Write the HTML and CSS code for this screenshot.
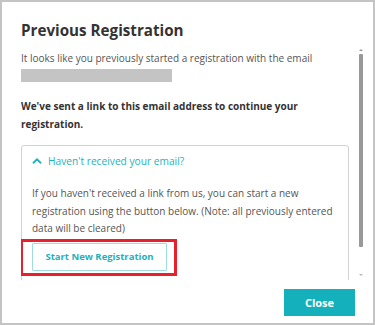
FILE: index.html
```html
<!DOCTYPE html>
<html lang="en">
<head>
<meta charset="utf-8">
<title>Previous Registration</title>
<link rel="stylesheet" href="styles.css">
</head>
<body>
<div class="dialog">
  <h1 class="title">Previous Registration</h1>
  <div class="body">
    <div class="content">
      <p class="intro">It looks like you previously started a registration with the email</p>
      <div class="redacted"></div>
      <p class="notice">We've sent a link to this email address to continue your registration.</p>
      <div class="accordion">
        <div class="acc-head">
          <svg class="chev" width="10" height="6" viewBox="0 0 10 6"><polyline points="1,5.2 5,1.3 9,5.2" fill="none" stroke="#21b3be" stroke-width="1.9"/></svg>
          <span>Haven't received your email?</span>
        </div>
        <div class="acc-body">
          <p class="acc-text">If you haven't received a link from us, you can start a new registration using the button below. (Note: all previously entered data will be cleared)</p>
          <div class="btn-wrap">
            <button class="btn-outline">Start New Registration</button>
            <span class="highlight"></span>
          </div>
        </div>
      </div>
    </div>
    <div class="scrollbar">
      <span class="arrow up"></span>
      <span class="thumb"></span>
      <span class="track-rest"></span>
      <span class="arrow down"></span>
    </div>
  </div>
  <div class="footer">
    <button class="btn-primary">Close</button>
  </div>
</div>
</body>
</html>
```
FILE: styles.css
```css
html, body {
  margin: 0;
  padding: 0;
  background: #ffffff;
}
body {
  font-family: "Open Sans", "Liberation Sans", sans-serif;
  color: #333;
}
.dialog {
  width: 375px;
  height: 325px;
  box-sizing: border-box;
  border: 2px solid #c4c4c4;
  display: flex;
  flex-direction: column;
  background: #fff;
}
.title {
  margin: 18px 0 0 19px;
  font-size: 15.2px;
  line-height: 20px;
  font-weight: 700;
  color: #333;
  height: 28px;
}
.body {
  display: flex;
  height: 232px;
  flex-shrink: 0;
  padding-left: 19px;
  padding-right: 8px;
  gap: 8px;
}
.content {
  width: 328px;
  overflow: hidden;
  padding-top: 1px;
}
.intro {
  margin: 0;
  font-size: 10px;
  line-height: 18px;
  color: #555;
}
.redacted {
  width: 151px;
  height: 13px;
  background: #c4c4c4;
  margin-top: 2px;
}
.notice {
  margin: 15px 0 0 0;
  font-size: 10px;
  line-height: 18px;
  font-weight: 700;
  color: #333;
}
.accordion {
  margin-top: 12px;
  border: 1px solid #d2d2d2;
  border-radius: 3px;
  padding: 6px 10px 40px 10px;
}
.acc-head {
  display: flex;
  align-items: center;
  gap: 6px;
  font-size: 10.2px;
  line-height: 18px;
  color: #21b3be;
}
.chev {
  display: block;
}
.acc-body {
  margin-top: 15px;
}
.acc-text {
  margin: 0;
  font-size: 10px;
  line-height: 17.5px;
  color: #555;
}
.btn-wrap {
  position: relative;
  display: inline-block;
  margin-top: 5px;
  vertical-align: top;
}
.btn-outline {
  display: block;
  width: 135px;
  height: 28px;
  box-sizing: border-box;
  background: #fff;
  border: 1px solid #9edce1;
  border-radius: 1px;
  font-family: "Open Sans", "Liberation Sans", sans-serif;
  font-size: 9.5px;
  font-weight: 700;
  color: #1fb0bb;
  padding: 0;
}
.highlight {
  position: absolute;
  left: -12px;
  top: -4px;
  right: -10px;
  bottom: -5px;
  border: 3px solid #e8202b;
  pointer-events: none;
}
.scrollbar {
  width: 8px;
  display: flex;
  flex-direction: column;
  align-items: center;
}
.arrow {
  width: 0;
  height: 0;
  border-left: 2px solid transparent;
  border-right: 2px solid transparent;
}
.arrow.up {
  margin-top: 1px;
  border-bottom: 2px solid #9c9c9c;
}
.arrow.down {
  margin-bottom: 4px;
  border-top: 2px solid #b8b8b8;
}
.thumb {
  width: 4px;
  height: 193px;
  margin-top: 3px;
  background: #999;
  border-radius: 1px;
}
.track-rest {
  flex: 1;
}
.footer {
  display: flex;
  justify-content: flex-end;
  padding: 9px 18px 0 0;
}
.btn-primary {
  width: 71px;
  height: 27px;
  border: none;
  background: #14b1bc;
  color: #fff;
  font-family: "Open Sans", "Liberation Sans", sans-serif;
  font-size: 11px;
  font-weight: 700;
  padding: 0;
}
```
